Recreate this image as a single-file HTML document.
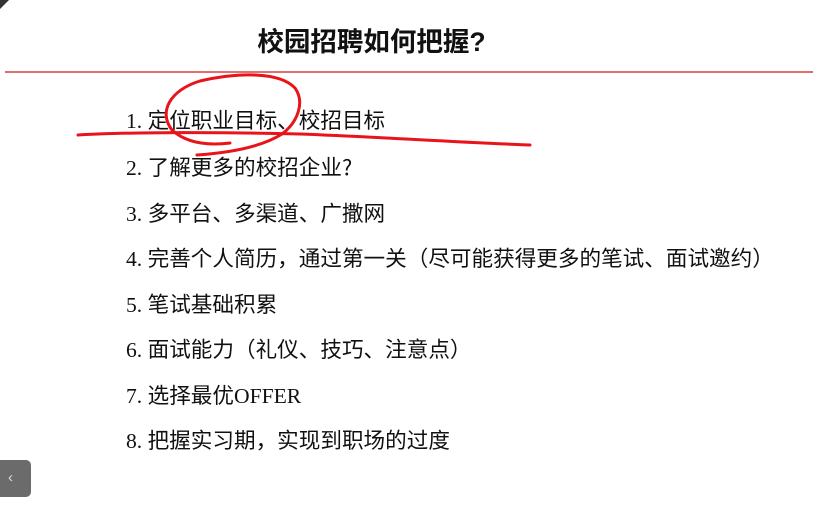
<!DOCTYPE html>
<html><head><meta charset="utf-8"><style>
html,body{margin:0;padding:0;background:#fff;width:823px;height:510px;overflow:hidden;position:relative}
.t{position:absolute;left:0;width:743px;top:20px;text-align:center;font:bold 26.5px "Liberation Sans","Noto Sans CJK SC",sans-serif;color:#111}
.hr{position:absolute;left:5px;width:808px;top:71px;height:2px;background:#e07070}
.i{position:absolute;left:126px;font:21.6px "Liberation Serif","Noto Sans CJK SC",serif;color:#111;white-space:nowrap;line-height:28px}
.i span{font-family:"Noto Sans CJK SC",sans-serif}
.btn{position:absolute;left:0;top:460px;width:31px;height:37px;background:#6b6b6b;border-radius:0 5px 5px 0;color:#ddd;font:15px sans-serif;line-height:35px;text-indent:8px}
</style></head><body>
<svg style="position:absolute;left:0;top:0" width="12" height="12"><polygon points="0,0 9,0 0,9" fill="#333"/></svg>
<div class="t">校园招聘如何把握?</div>
<div class="hr"></div>
<div class="i" style="top:106px">1. <span>定位职业目标、校招目标</span></div>
<div class="i" style="top:153px">2. <span>了解更多的校招企业?</span></div>
<div class="i" style="top:199px">3. <span>多平台、多渠道、广撒网</span></div>
<div class="i" style="top:244px">4. <span>完善个人简历，通过第一关（尽可能获得更多的笔试、面试邀约）</span></div>
<div class="i" style="top:290px">5. <span>笔试基础积累</span></div>
<div class="i" style="top:335px">6. <span>面试能力（礼仪、技巧、注意点）</span></div>
<div class="i" style="top:381px">7. <span>选择最优</span>OFFER</div>
<div class="i" style="top:426px">8. <span>把握实习期，实现到职场的过度</span></div>
<svg style="position:absolute;left:0;top:0" width="823" height="510" fill="none" stroke="#e8141a" stroke-width="3" stroke-linecap="round">
<path d="M78,135 C130,132 220,132 300,134 C380,137 450,142 530,145"/>
<path d="M230,143 C205,146 185,142 172,130 C158,112 170,90 200,81 C240,72 280,72 295,88 C305,102 298,122 282,134 C260,148 225,153 197,155"/>
</svg>
<div class="btn">‹</div>
</body></html>
